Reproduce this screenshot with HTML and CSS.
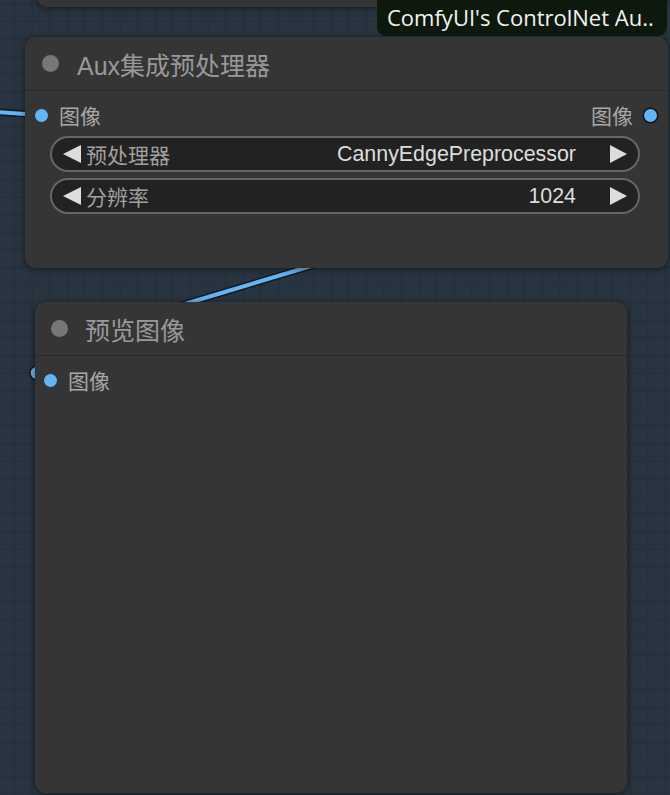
FILE: index.html
```html
<!DOCTYPE html>
<html lang="zh-CN">
<head>
  <meta charset="UTF-8" />
  <title>ComfyUI 节点</title>
  <link rel="stylesheet" href="styles.css">
</head>
<body>
  <div class="canvas">
    <svg class="links" width="670" height="795" viewBox="0 0 670 795">
      <path class="link-shadow" d="M -2 112 L 40 115" />
      <path class="link" d="M -2 112 L 40 115" />
      <path class="link-shadow" d="M 338 258 L 168 309" />
      <path class="link" d="M 338 258 L 168 309" />
      <circle class="link-end" cx="37" cy="373" r="7" />
    </svg>

    <div class="node node-prev"></div>
    <div class="badge">ComfyUI's ControlNet Au..</div>

    <div class="node node-aux">
      <div class="node-title">
        <span class="title-dot"></span>
        <span class="title-text">Aux集成预处理器</span>
      </div>
      <div class="node-body">
        <div class="slot-row">
          <div class="slot">
            <span class="slot-dot"></span>
            <span class="slot-label">图像</span>
          </div>
          <div class="slot">
            <span class="slot-label">图像</span>
            <span class="slot-dot out"></span>
          </div>
        </div>
        <div class="widgets">
          <div class="widget">
            <span class="arrow left"></span>
            <span class="widget-label">预处理器</span>
            <span class="widget-value">CannyEdgePreprocessor</span>
            <span class="arrow right"></span>
          </div>
          <div class="widget">
            <span class="arrow left"></span>
            <span class="widget-label">分辨率</span>
            <span class="widget-value">1024</span>
            <span class="arrow right"></span>
          </div>
        </div>
      </div>
    </div>

    <div class="node node-preview">
      <div class="node-title">
        <span class="title-dot"></span>
        <span class="title-text">预览图像</span>
      </div>
      <div class="node-body">
        <div class="slot-row">
          <div class="slot">
            <span class="slot-dot"></span>
            <span class="slot-label">图像</span>
          </div>
        </div>
      </div>
    </div>
  </div>
</body>
</html>
```

FILE: styles.css
```css
:root {
  --bg: #28343f;
  --grid: #222d37;
  --node: #353535;
  --title: #999999;
  --text: #a8a8a8;
  --value: #dddddd;
  --slot: #64b5f6;
  --widget-bg: #222222;
  --widget-border: #666666;
}

body {
  margin: 0;
  background: var(--bg);
  font-family: 'Liberation Sans', 'Noto Sans CJK SC', sans-serif;
}

.canvas {
  position: relative;
  width: 670px;
  height: 795px;
  overflow: hidden;
  background-color: var(--bg);
  background-image:
    linear-gradient(to right, var(--grid) 1px, transparent 1px),
    linear-gradient(to bottom, var(--grid) 1px, transparent 1px);
  background-size: 17.6px 17.6px;
  background-position: 14px 3px;
}

.links {
  position: absolute;
  left: 0;
  top: 0;
}

.link-shadow {
  stroke: rgba(0, 0, 0, 0.55);
  stroke-width: 7;
  fill: none;
}

.link {
  stroke: var(--slot);
  stroke-width: 4;
  fill: none;
}

.link-end {
  fill: var(--slot);
  stroke: #151515;
  stroke-width: 1.5;
}

/* nodes sit on a free canvas */
.node {
  position: absolute;
  background: var(--node);
  border-radius: 10px;
  box-shadow: 0 1px 6px rgba(0, 0, 0, 0.5);
  display: flex;
  flex-direction: column;
}

.node-prev {
  left: 37px;
  top: -30px;
  width: 630px;
  height: 37px;
}

.node-aux {
  left: 25px;
  top: 37px;
  width: 643px;
  height: 231px;
}

.node-preview {
  left: 35px;
  top: 302px;
  width: 592px;
  height: 491px;
}

.badge {
  position: absolute;
  left: 377px;
  top: -8px;
  width: 290px;
  height: 44px;
  box-sizing: border-box;
  padding: 8px 0 0 10px;
  background: #0e190e;
  border-radius: 9px;
  color: #f2f2f2;
  font-family: 'Open Sans', 'Noto Sans', sans-serif;
  font-size: 22px;
  line-height: 34px;
  white-space: nowrap;
}

.node-title {
  height: 53px;
  flex: none;
  display: flex;
  align-items: center;
  gap: 18px;
  padding-left: 17px;
  border-bottom: 1px solid #2a2a2a;
}

.node-preview .node-title {
  gap: 17px;
  padding-left: 16px;
}

.title-dot {
  width: 17px;
  height: 17px;
  border-radius: 50%;
  background: #777777;
}

.title-text {
  color: var(--title);
  font-size: 25px;
}

.node-body {
  padding-top: 12px;
}

.slot-row {
  display: flex;
  justify-content: space-between;
  align-items: center;
  height: 24px;
  padding: 0 11px 0 10px;
}

.node-preview .slot-row {
  padding: 0 10px 0 9px;
}

.slot {
  display: flex;
  align-items: center;
  gap: 11px;
}

.slot-dot {
  width: 13px;
  height: 13px;
  border-radius: 50%;
  background: var(--slot);
}

.slot-dot.out {
  box-shadow: 0 0 0 1.5px #151515;
}

.slot-label {
  color: var(--text);
  font-family: 'Noto Sans CJK SC', sans-serif;
  font-size: 21px;
  line-height: 24px;
}

.widgets {
  display: flex;
  flex-direction: column;
  gap: 6px;
  margin-top: 9px;
  padding: 0 28px 0 25px;
}

.widget {
  height: 36px;
  box-sizing: border-box;
  display: flex;
  align-items: center;
  padding: 0 11px;
  background: var(--widget-bg);
  border: 2px solid var(--widget-border);
  border-radius: 18px;
  font-size: 21.4px;
}

.widget-label {
  margin-left: 5px;
  color: #a0a0a0;
  font-family: 'Noto Sans CJK SC', sans-serif;
  font-size: 21px;
  flex: 1;
}

.widget-value {
  color: var(--value);
  margin-right: 34px;
}

.arrow {
  width: 0;
  height: 0;
  border-top: 9px solid transparent;
  border-bottom: 9px solid transparent;
}

.arrow.left {
  border-right: 18px solid #dddddd;
}

.arrow.right {
  border-left: 17px solid #dddddd;
}
```
